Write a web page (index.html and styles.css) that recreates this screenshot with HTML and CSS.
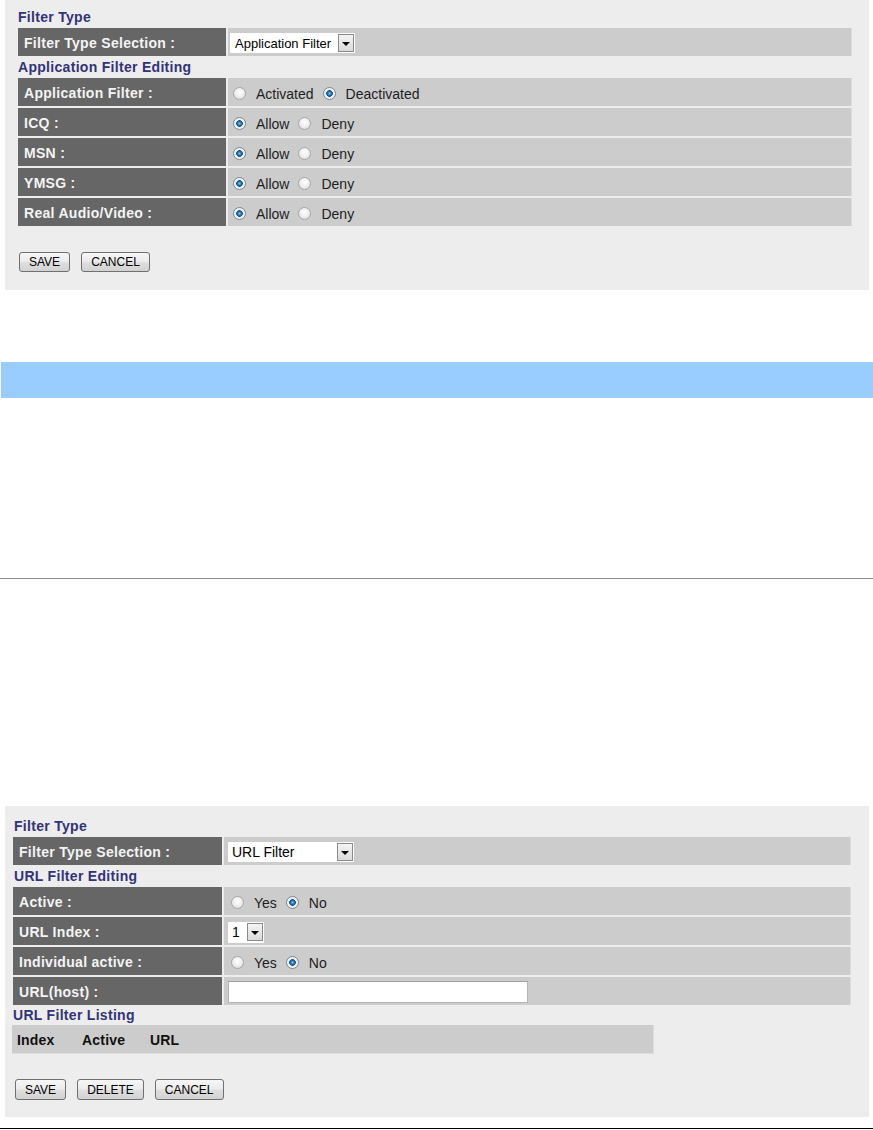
FILE: index.html
```html
<!DOCTYPE html>
<html>
<head>
<meta charset="utf-8">
<link rel="stylesheet" href="styles.css">
</head>
<body>
<div class="panel panel-app">
  <div class="title">Filter Type</div>
  <div class="row">
    <div class="label">Filter Type Selection :</div>
    <div class="value"><div class="select sel-app"><span class="sel-text">Application Filter</span><span class="arrow"></span></div></div>
  </div>
  <div class="title">Application Filter Editing</div>
  <div class="rows">
    <div class="row">
      <div class="label">Application Filter :</div>
      <div class="value"><span class="radio"></span><span class="opt">Activated</span><span class="radio on"></span><span class="opt">Deactivated</span></div>
    </div>
    <div class="row">
      <div class="label">ICQ :</div>
      <div class="value"><span class="radio on"></span><span class="opt">Allow</span><span class="radio"></span><span class="opt">Deny</span></div>
    </div>
    <div class="row">
      <div class="label">MSN :</div>
      <div class="value"><span class="radio on"></span><span class="opt">Allow</span><span class="radio"></span><span class="opt">Deny</span></div>
    </div>
    <div class="row">
      <div class="label">YMSG :</div>
      <div class="value"><span class="radio on"></span><span class="opt">Allow</span><span class="radio"></span><span class="opt">Deny</span></div>
    </div>
    <div class="row">
      <div class="label">Real Audio/Video :</div>
      <div class="value"><span class="radio on"></span><span class="opt">Allow</span><span class="radio"></span><span class="opt">Deny</span></div>
    </div>
  </div>
  <div class="buttons">
    <span class="btn">SAVE</span>
    <span class="btn">CANCEL</span>
  </div>
</div>

<div class="bluebar"></div>
<div class="grayline"></div>

<div class="panel panel-url">
  <div class="title">Filter Type</div>
  <div class="row">
    <div class="label">Filter Type Selection :</div>
    <div class="value"><div class="select sel-url"><span class="sel-text">URL Filter</span><span class="arrow"></span></div></div>
  </div>
  <div class="title">URL Filter Editing</div>
  <div class="rows">
    <div class="row">
      <div class="label">Active :</div>
      <div class="value"><span class="radio"></span><span class="opt">Yes</span><span class="radio on"></span><span class="opt">No</span></div>
    </div>
    <div class="row">
      <div class="label">URL Index :</div>
      <div class="value"><div class="select sel-idx"><span class="sel-text">1</span><span class="arrow"></span></div></div>
    </div>
    <div class="row">
      <div class="label">Individual active :</div>
      <div class="value"><span class="radio"></span><span class="opt">Yes</span><span class="radio on"></span><span class="opt">No</span></div>
    </div>
    <div class="row">
      <div class="label">URL(host) :</div>
      <div class="value"><span class="textbox"></span></div>
    </div>
  </div>
  <div class="title title-list">URL Filter Listing</div>
  <div class="listing">
    <span class="col-index">Index</span>
    <span class="col-active">Active</span>
    <span class="col-url">URL</span>
  </div>
  <div class="buttons buttons-url">
    <span class="btn">SAVE</span>
    <span class="btn">DELETE</span>
    <span class="btn">CANCEL</span>
  </div>
</div>
<div class="blackline"></div>
</body>
</html>
```

FILE: styles.css
```css
html, body {
  margin: 0;
  padding: 0;
  background: #ffffff;
}
body {
  font-family: "Liberation Sans", Arial, sans-serif;
  width: 873px;
}
.panel {
  background: #ededed;
  margin-left: 5px;
  width: 864px;
  box-sizing: border-box;
}
.panel-app {
  padding: 6px 17px 18px 13px;
}
.panel-url {
  margin-top: 227px;
  padding: 9px 18px 17px 8px;
}
.title {
  height: 22px;
  line-height: 22px;
  font-size: 14px;
  font-weight: bold;
  letter-spacing: 0.3px;
  color: #333377;
}
.panel-url .title {
  padding-left: 1px;
}
.panel-url .title-list {
  height: 20px;
  line-height: 20px;
  padding-left: 0;
}
.rows {
  display: flex;
  flex-direction: column;
  gap: 2px;
}
.row {
  display: flex;
  height: 28px;
  gap: 2px;
}
.label {
  width: 208px;
  flex: none;
  background: #666666;
  color: #f4f4f4;
  font-size: 14px;
  font-weight: bold;
  letter-spacing: 0.3px;
  line-height: 30px;
  padding-left: 6px;
  box-sizing: border-box;
}
.panel-url .label {
  width: 209px;
}
.value {
  flex: 1;
  background: #cccccc;
  border-right: 1px solid #dcdcdc;
  display: flex;
  align-items: center;
  padding-left: 2px;
  font-size: 14px;
  color: #1e1e1e;
}
.panel-url .value {
  padding-left: 4px;
}
.radio {
  width: 13px;
  height: 13px;
  box-sizing: border-box;
  border-radius: 50%;
  border: 1px solid #a8a8a8;
  background: radial-gradient(circle at 50% 40%, #ffffff 0%, #f0f0f0 45%, #d4d4d4 100%);
  margin-left: 3px;
  margin-right: 10px;
  margin-top: 2px;
  flex: none;
}
.radio.on {
  border-color: #7a8a99;
  background: radial-gradient(circle at 50% 50%, #7fc6ee 0px, #1f6fa8 2px, #164f80 3px, #e6e6e6 3.6px, #f4f4f4 5px, #d0d0d0 7px);
}
.opt {
  margin-right: 6px;
  line-height: 16px;
  padding-top: 4px;
}
.select {
  display: flex;
  align-items: center;
  background: #ffffff;
  height: 19px;
  box-sizing: border-box;
  font-size: 13px;
  color: #000;
  padding: 1px;
}
.sel-text {
  flex: 1;
  padding-left: 4px;
  white-space: nowrap;
}
.sel-app {
  width: 125px;
  height: 20px;
  margin-top: 2px;
}
.sel-url {
  width: 126px;
  height: 20px;
  font-size: 14px;
  margin-top: 2px;
}
.sel-url .sel-text {
  padding-left: 3px;
}
.sel-idx {
  width: 36px;
  height: 21px;
  margin-top: 2px;
  font-size: 14px;
}
.sel-idx .sel-text {
  padding-left: 3px;
}
.arrow {
  width: 16px;
  height: 18px;
  box-sizing: border-box;
  border: 1px solid #8a8a8a;
  background: linear-gradient(#f4f4f4, #dadada);
  position: relative;
  flex: none;
}
.arrow::after {
  content: "";
  position: absolute;
  left: 3px;
  top: 7px;
  border-left: 4px solid transparent;
  border-right: 4px solid transparent;
  border-top: 4px solid #000;
}
.textbox {
  display: block;
  width: 300px;
  height: 22px;
  box-sizing: border-box;
  background: #ffffff;
  border: 1px solid #b5b5b5;
  border-top-color: #a0a0a0;
  margin-top: 2px;
}
.listing {
  width: 642px;
  margin-left: -1px;
  height: 29px;
  background: #cccccc;
  border-right: 1px solid #dcdcdc;
  border-bottom: 1px solid #dcdcdc;
  box-sizing: border-box;
  display: flex;
  align-items: center;
  font-size: 14px;
  font-weight: bold;
  color: #111;
  letter-spacing: 0.2px;
  padding-top: 2px;
}
.col-index { margin-left: 5px; width: 65px; }
.col-active { width: 68px; }
.buttons {
  display: flex;
  gap: 11px;
  margin-top: 26px;
  padding-left: 1px;
}
.buttons-url {
  margin-top: 25px;
  padding-left: 2px;
}
.btn {
  display: inline-flex;
  align-items: center;
  justify-content: center;
  height: 20px;
  box-sizing: border-box;
  padding: 0 9px;
  border: 1px solid #707070;
  border-radius: 3px;
  background: linear-gradient(#f6f6f6 0%, #ececec 45%, #dedede 55%, #d2d2d2 100%);
  font-size: 12px;
  color: #000;
}
.buttons-url .btn {
  height: 21px;
}
.bluebar {
  margin-top: 72px;
  margin-left: 1px;
  height: 36px;
  background: #99ccff;
}
.grayline {
  margin-top: 180px;
  height: 1px;
  background: #8c8c8c;
}
.blackline {
  margin-top: 11px;
  height: 1px;
  background: #000;
}
```
